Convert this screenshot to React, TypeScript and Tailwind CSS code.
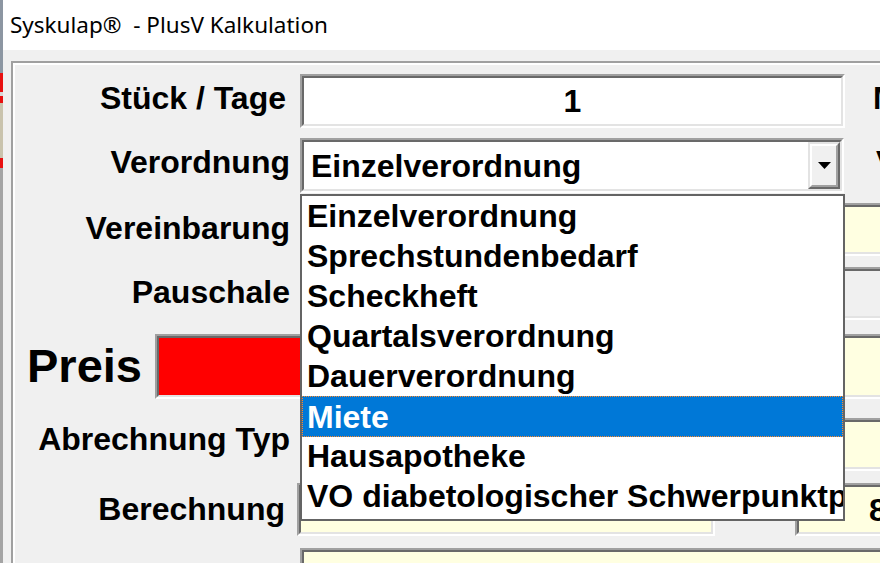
import React from 'react';

type BoxProps = { className?: string; inner?: string; children?: React.ReactNode };

// sunken 3D edit box (Win classic style)
function Sunken({ className = '', inner = '', children }: BoxProps) {
  return (
    <div className={`shrink-0 border-2 border-t-[#a0a0a0] border-l-[#a0a0a0] border-r-white border-b-white ${className}`}>
      <div className={`h-full border-2 border-t-[#696969] border-l-[#696969] border-r-[#e3e3e3] border-b-[#e3e3e3] ${inner}`}>
        {children}
      </div>
    </div>
  );
}

const items = [
  'Einzelverordnung',
  'Sprechstundenbedarf',
  'Scheckheft',
  'Quartalsverordnung',
  'Dauerverordnung',
  'Miete',
  'Hausapotheke',
  'VO diabetologischer Schwerpunktpraxis',
];

export default function App() {
  return (
    <div className="relative flex w-[880px] h-[563px] overflow-hidden bg-[#f0f0f0] text-black font-['Liberation_Sans',Arial,sans-serif]">
      {/* edge of the window behind */}
      <div className="flex flex-col w-[3px] shrink-0">
        <div className="h-[73px] bg-[#8c96a2]" />
        <div className="h-[19px] bg-[#e81010]" />
        <div className="h-[4px] bg-[#d8d8d8]" />
        <div className="h-[7px] bg-[#e81010]" />
        <div className="h-[55px] bg-[#c9c3ad]" />
        <div className="h-[10px] bg-[#e81010]" />
        <div className="flex-1 bg-[#a4a4a4]" />
      </div>

      <div className="flex flex-col flex-1 min-w-0">
        <div className="h-[50px] shrink-0 bg-white flex items-center pl-[7px] pb-[1px] text-[22.5px] font-['Noto_Sans',sans-serif] whitespace-nowrap">
          Syskulap®&nbsp; - PlusV Kalkulation
        </div>

        <div className="flex-1 pl-[8px] pt-[11px]">
          <div className="w-[1000px] h-[600px] border-l-2 border-t-2 border-[#a0a0a0]">
            <div className="h-full border-l-2 border-t-2 border-white text-[32px] font-bold leading-none whitespace-nowrap">
              {/* Stück / Tage */}
              <div className="flex items-center h-[54px] mt-[9px]">
                <div className="w-[275px] shrink-0 text-right pr-[4px] pb-[6px]">Stück / Tage</div>
                <Sunken className="ml-[10px] w-[545px] h-[54px]" inner="bg-white flex items-center justify-center">
                  1
                </Sunken>
                <div className="ml-[28px] pb-[6px]">Menge</div>
              </div>

              {/* Verordnung combobox */}
              <div className="flex items-center h-[55px] mt-[10px]">
                <div className="w-[275px] shrink-0 text-right pb-[8px]">Verordnung</div>
                <Sunken className="ml-[10px] w-[544px] h-[55px]" inner="bg-white flex items-center">
                  <div className="flex-1 pl-[7px]">Einzelverordnung</div>
                  <div className="w-[32px] h-full border-2 border-t-[#e3e3e3] border-l-[#e3e3e3] border-r-[#696969] border-b-[#696969]">
                    <div className="h-full border-2 border-t-white border-l-white border-r-[#a0a0a0] border-b-[#a0a0a0] bg-[#f0f0f0] flex items-center justify-center">
                      <svg width="13" height="7" viewBox="0 0 13 7">
                        <polygon points="0,0 13,0 6.5,7" fill="#000" />
                      </svg>
                    </div>
                  </div>
                </Sunken>
                <div className="ml-[32px] pb-[8px]">Vertrag</div>
              </div>

              {/* Vereinbarung */}
              <div className="flex items-center h-[53px] mt-[10px]">
                <div className="w-[275px] shrink-0 text-right pb-[3px]">Vereinbarung</div>
                <Sunken className="ml-[10px] w-[640px] h-[53px]" inner="bg-[#ffffe1]" />
              </div>

              {/* Pauschale */}
              <div className="flex items-center h-[53px] mt-[11px]">
                <div className="w-[275px] shrink-0 text-right pb-[4px]">Pauschale</div>
                <Sunken className="ml-[10px] w-[640px] h-[53px]" inner="bg-[#f0f0f0]" />
              </div>

              {/* Preis */}
              <div className="flex items-center h-[65px] mt-[14px]">
                <div className="w-[140px] shrink-0 pl-[12px] pb-[2px] text-[47px]">Preis</div>
                <Sunken className="w-[405px] h-[65px]" inner="bg-[#ff0000]" />
                <Sunken className="ml-[10px] w-[400px] h-[65px]" inner="bg-[#ffffe1]" />
              </div>

              {/* Abrechnung Typ */}
              <div className="flex items-center h-[53px] mt-[19px]">
                <div className="w-[275px] shrink-0 text-right pb-[11px]">Abrechnung Typ</div>
                <Sunken className="ml-[10px] w-[640px] h-[53px]" inner="bg-[#ffffe1]" />
              </div>

              {/* Berechnung */}
              <div className="flex items-center h-[53px] mt-[12px]">
                <div className="w-[275px] shrink-0 text-right pr-[5px] pb-[2px]">Berechnung</div>
                <Sunken className="ml-[7px] w-[418px] h-[53px]" inner="bg-[#ffffe1]" />
                <Sunken className="ml-[80px] w-[300px] h-[53px]" inner="bg-[#ffffe1] flex items-center pl-[70px]">
                  8,00
                </Sunken>
              </div>

              {/* next row */}
              <div className="flex h-[53px] mt-[12px]">
                <Sunken className="ml-[285px] w-[640px] h-[53px]" inner="bg-[#ffffe1]" />
              </div>
            </div>
          </div>
        </div>
      </div>

      {/* open dropdown list */}
      <div className="absolute left-[300px] top-[194px] w-[545px] h-[327px] border-2 border-[#646464] bg-white overflow-hidden text-[32px] font-bold leading-none whitespace-nowrap">
        {items.map((it) =>
          it === 'Miete' ? (
            <div key={it} className="h-[41px] -mb-[1px] flex items-center pl-[4px] bg-[#0078d7] text-white border border-dotted border-[#ff8a2b]">
              {it}
            </div>
          ) : (
            <div key={it} className="h-[40px] flex items-center pl-[5px] overflow-hidden">
              {it}
            </div>
          )
        )}
      </div>
    </div>
  );
}
